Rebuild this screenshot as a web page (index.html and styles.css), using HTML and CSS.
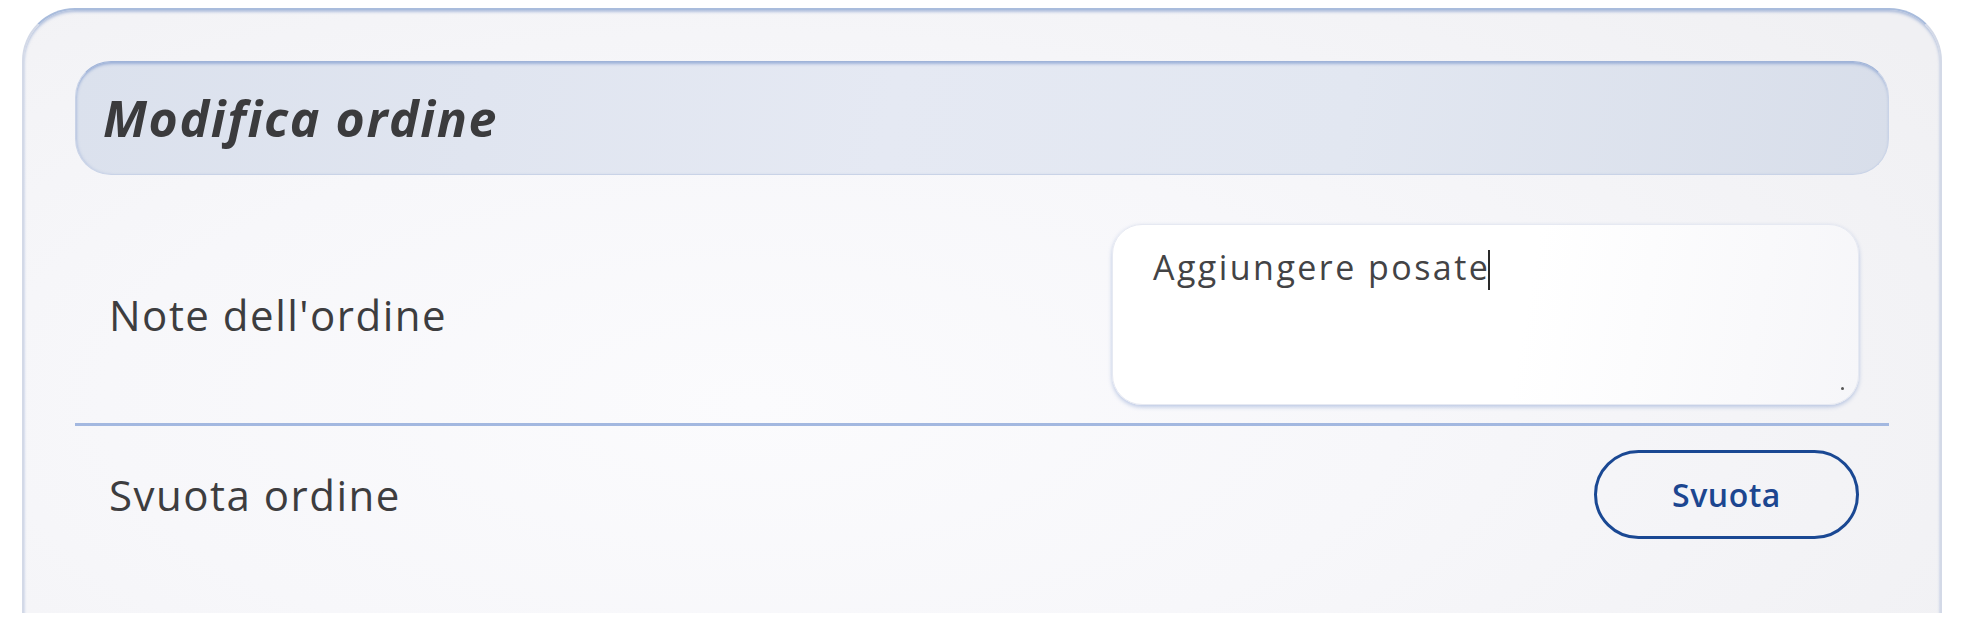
FILE: index.html
```html
<!DOCTYPE html>
<html lang="it">
<head>
<meta charset="utf-8">
<title>Modifica ordine</title>
<link rel="stylesheet" href="styles.css">
</head>
<body>
<div class="viewport">
  <section class="card">
    <header class="card-header">
      <h1 class="title">Modifica ordine</h1>
    </header>
    <div class="row row-notes">
      <label class="label">Note dell'ordine</label>
      <div class="textbox" role="textbox" aria-multiline="true">
        <span class="textbox-text">Aggiungere posate</span><span class="caret"></span>
        <span class="grip"></span>
      </div>
    </div>
    <div class="row row-clear">
      <span class="label">Svuota ordine</span>
      <button class="btn-outline" type="button">Svuota</button>
    </div>
  </section>
</div>
</body>
</html>
```

FILE: styles.css
```css
* { box-sizing: border-box; }

html, body {
  margin: 0;
  padding: 0;
  background: #ffffff;
}

body {
  font-family: "Open Sans", "Noto Sans", "Liberation Sans", sans-serif;
  color: #3c3c3e;
}

.viewport {
  height: 613px;
  overflow: hidden;
  padding: 8px 20px 0 22px;
}

.card {
  min-height: 720px;
  border: 2px solid #d3d9e7;
  border-top-color: #a9bcdc;
  border-radius: 53px;
  padding: 51px;
  background: radial-gradient(ellipse 75% 85% at 38% 55%, #fbfbfd 0%, #f7f7fa 45%, #f0f0f3 100%);
  box-shadow: inset 0 2px 3px rgba(120, 148, 200, 0.55);
}

.card-header {
  height: 114px;
  display: flex;
  align-items: center;
  padding-left: 27px;
  border-radius: 36px;
  border: 1px solid #c9d3e7;
  border-top-color: #9fb3d8;
  background: linear-gradient(100deg, #dbe1ed 0%, #e5e9f3 45%, #e2e7f1 70%, #d8deea 100%);
  box-shadow: inset 0 3px 3px -1px rgba(110, 140, 200, 0.55), inset 2px 0 3px -1px rgba(130, 155, 205, 0.35);
}

.title {
  margin: 0;
  font-size: 50px;
  font-weight: 700;
  font-style: italic;
  letter-spacing: 1.6px;
  color: #3b3b3d;
  line-height: 1;
}

.row {
  display: flex;
  align-items: center;
  justify-content: space-between;
  padding: 0 30px 0 34px;
}

.row-notes {
  margin-top: 49px;
  padding-bottom: 18px;
  border-bottom: 3px solid #a3b8e0;
}

.row-clear {
  padding-top: 24px;
}

.label {
  font-size: 42px;
  font-weight: 400;
  letter-spacing: 1.5px;
  color: #3d3d3f;
}

.textbox {
  position: relative;
  width: 747px;
  height: 181px;
  padding: 18px 40px;
  border-radius: 30px;
  border: 1px solid #e6e9f2;
  background: linear-gradient(100deg, #ffffff 0%, #ffffff 55%, #f6f6f9 100%);
  box-shadow: 0 2px 4px rgba(110, 140, 200, 0.45);
  font-size: 34px;
  color: #434345;
  line-height: 48px;
}

.textbox-text {
  letter-spacing: 2.45px;
}

.caret {
  display: inline-block;
  width: 2px;
  height: 40px;
  margin-left: -2px;
  vertical-align: -10px;
  background: #2a2a2a;
}

.grip {
  position: absolute;
  right: 14px;
  bottom: 14px;
  width: 3px;
  height: 3px;
  border-radius: 50%;
  background: #555;
}

.btn-outline {
  width: 265px;
  height: 89px;
  border: 3px solid #1a4893;
  border-radius: 45px;
  background: transparent;
  font-family: "Open Sans", "Noto Sans", "Liberation Sans", sans-serif;
  font-size: 32px;
  font-weight: 600;
  color: #1c4690;
  letter-spacing: 0.5px;
  cursor: pointer;
}
```
